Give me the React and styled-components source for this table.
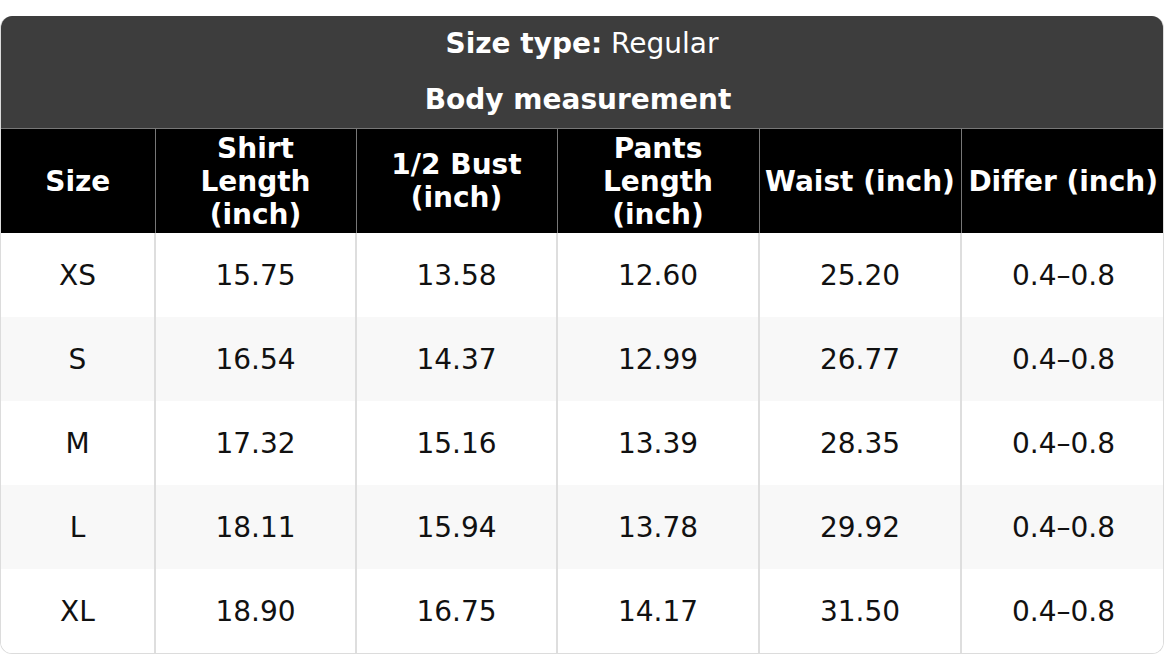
import React from "react";
import styled, { createGlobalStyle } from "styled-components";

const Global = createGlobalStyle`
  html, body { margin: 0; padding: 0; background: #ffffff; }
  body { font-family: "DejaVu Sans", "Liberation Sans", sans-serif; }
`;

const Page = styled.div`
  padding-top: 16px;
  width: 1164px;
`;

const Card = styled.div`
  border-radius: 12px;
  overflow: hidden;
  border: 1px solid #dcdcdc;
  border-top: none;
  background: #fff;
`;

const Banner = styled.div`
  background: #3d3d3d;
  color: #fff;
  display: flex;
  flex-direction: column;
  align-items: center;
  padding: 11px 0 0;
  height: 112px;
  box-sizing: border-box;
`;

const BannerLine = styled.div`
  font-size: 28px;
  line-height: 33px;
  height: ${(p) => p.$h}px;
  padding-right: ${(p) => p.$shift || 0}px;
  font-weight: ${(p) => (p.$bold ? 700 : 400)};
  b { font-weight: 700; }
`;

const Table = styled.table`
  width: 100%;
  border-collapse: collapse;
  table-layout: fixed;
`;

const Th = styled.th`
  background: #000;
  color: #fff;
  font-size: 28px;
  line-height: 33px;
  font-weight: 700;
  height: 104px;
  padding: 0 2px;
  border: 1px solid #777;
  border-bottom: none;
  text-align: center;
  vertical-align: middle;
  white-space: ${(p) => (p.$nowrap ? "nowrap" : "normal")};
  &:first-child { border-left: none; }
  &:last-child { border-right: none; }
`;

const Tr = styled.tr`
  background: ${(p) => (p.$alt ? "#f8f8f8" : "#ffffff")};
`;

const Td = styled.td`
  height: 84px;
  padding: 0;
  font-size: 28px;
  color: #111;
  text-align: center;
  vertical-align: middle;
  border-left: 2px solid #dedede;
  &:first-child { border-left: none; }
`;

const cols = [154, 201, 201, 202, 202, 204];

const heads = [
  { t: "Size" },
  { t: "Shirt Length (inch)" },
  { t: "1/2 Bust (inch)" },
  { t: "Pants Length (inch)" },
  { t: "Waist (inch)", nw: true },
  { t: "Differ (inch)", nw: true },
];

const rows = [
  ["XS", "15.75", "13.58", "12.60", "25.20", "0.4–0.8"],
  ["S", "16.54", "14.37", "12.99", "26.77", "0.4–0.8"],
  ["M", "17.32", "15.16", "13.39", "28.35", "0.4–0.8"],
  ["L", "18.11", "15.94", "13.78", "29.92", "0.4–0.8"],
  ["XL", "18.90", "16.75", "14.17", "31.50", "0.4–0.8"],
];

export default function App() {
  return (
    <Page>
      <Global />
      <Card>
        <Banner>
          <BannerLine $h={56}>
            <b>Size type:</b> Regular
          </BannerLine>
          <BannerLine $bold $h={45} $shift={8}>
            Body measurement
          </BannerLine>
        </Banner>
        <Table>
          <colgroup>
            {cols.map((w, i) => (
              <col key={i} style={{ width: w }} />
            ))}
          </colgroup>
          <thead>
            <tr>
              {heads.map((h) => (
                <Th key={h.t} $nowrap={h.nw}>
                  {h.t}
                </Th>
              ))}
            </tr>
          </thead>
          <tbody>
            {rows.map((r, i) => (
              <Tr key={r[0]} $alt={i % 2 === 1}>
                {r.map((c, j) => (
                  <Td key={j}>{c}</Td>
                ))}
              </Tr>
            ))}
          </tbody>
        </Table>
      </Card>
    </Page>
  );
}
